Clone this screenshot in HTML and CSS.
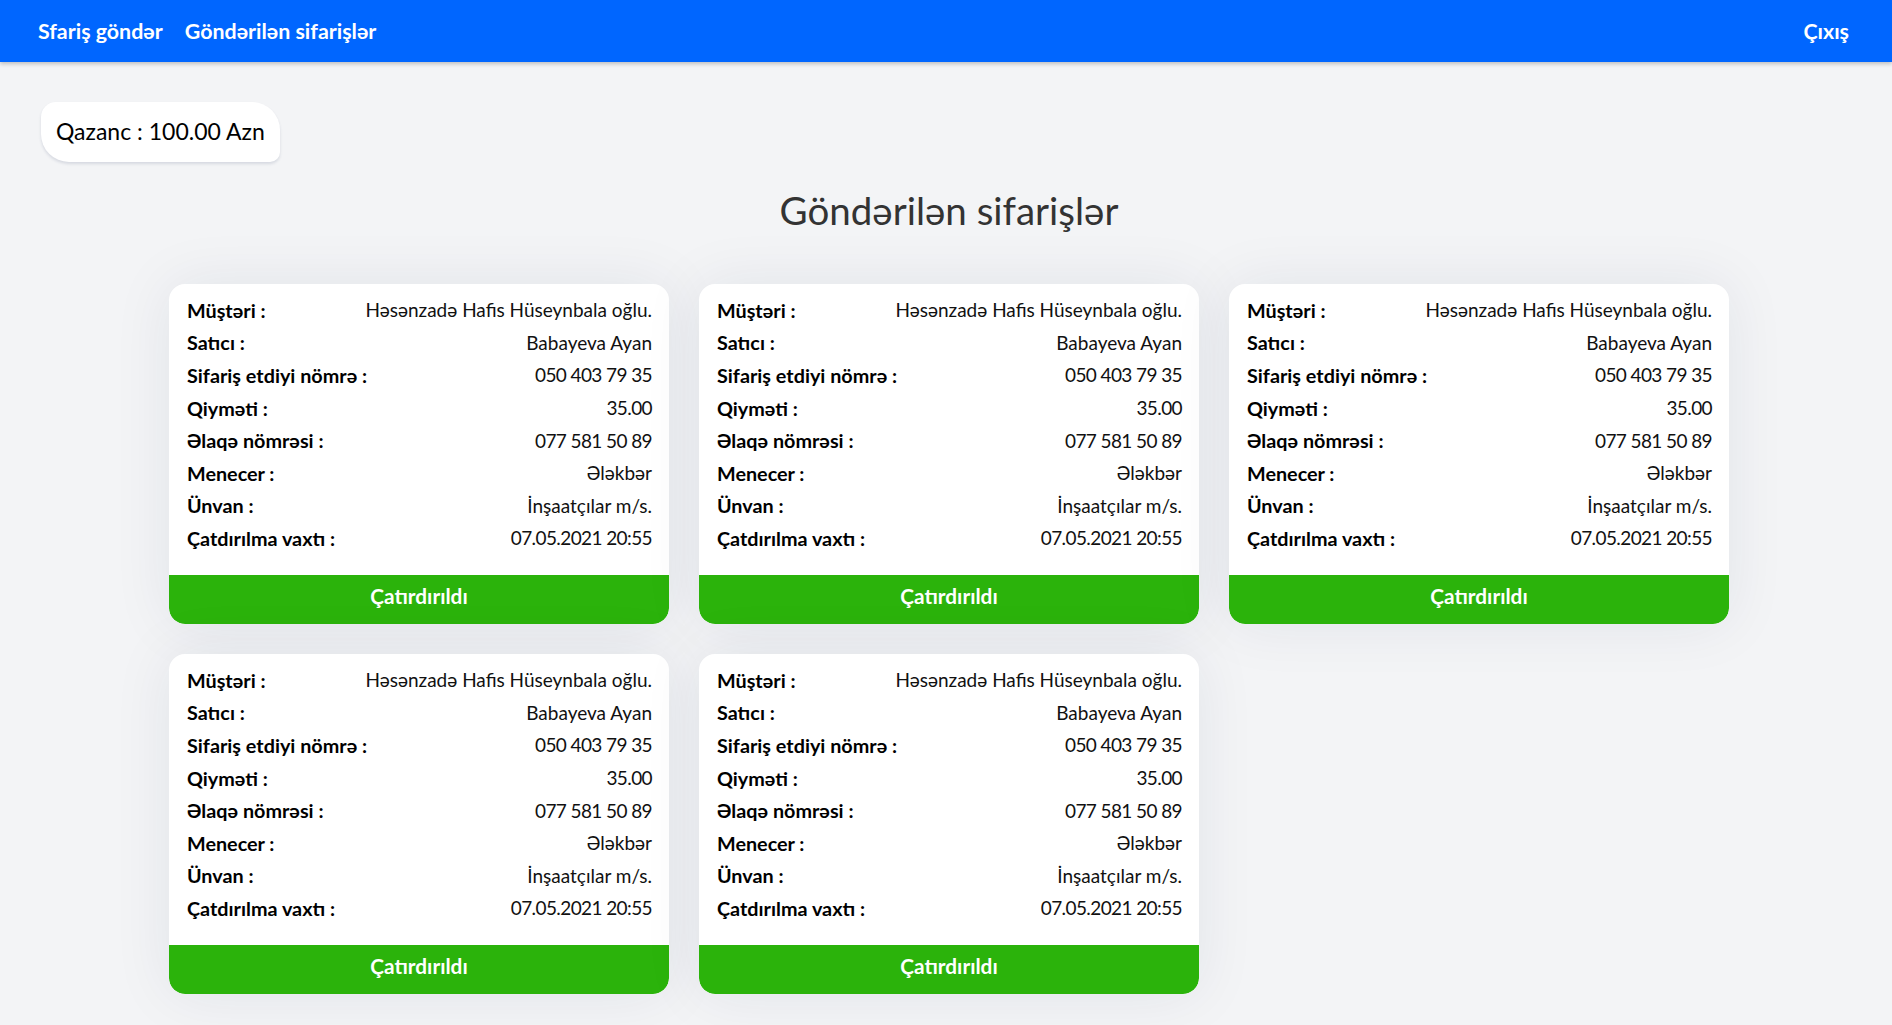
FILE: index.html
```html
<!DOCTYPE html>
<html lang="az">
<head>
<meta charset="utf-8">
<title>Göndərilən sifarişlər</title>
<link rel="stylesheet" href="styles.css">
</head>
<body>
<nav class="navbar">
  <div class="nav-links">
    <a class="nav-link" href="#">Sfariş göndər</a>
    <a class="nav-link" href="#">Göndərilən sifarişlər</a>
  </div>
  <a class="nav-link" href="#">Çıxış</a>
</nav>

<div class="earnings">Qazanc : 100.00 Azn</div>

<main class="orders">
  <h1 class="orders-title">Göndərilən sifarişlər</h1>
  <div class="order-grid">

    <div class="order-card">
      <div class="order-info">
        <div class="info-row"><span class="info-label">Müştəri :</span><span class="info-value">Həsənzadə Hafis Hüseynbala oğlu.</span></div>
        <div class="info-row"><span class="info-label">Satıcı :</span><span class="info-value">Babayeva Ayan</span></div>
        <div class="info-row"><span class="info-label">Sifariş etdiyi nömrə :</span><span class="info-value num">050 403 79 35</span></div>
        <div class="info-row"><span class="info-label">Qiyməti :</span><span class="info-value num">35.00</span></div>
        <div class="info-row"><span class="info-label">Əlaqə nömrəsi :</span><span class="info-value num">077 581 50 89</span></div>
        <div class="info-row"><span class="info-label">Menecer :</span><span class="info-value">Ələkbər</span></div>
        <div class="info-row"><span class="info-label">Ünvan :</span><span class="info-value">İnşaatçılar m/s.</span></div>
        <div class="info-row"><span class="info-label">Çatdırılma vaxtı :</span><span class="info-value num">07.05.2021 20:55</span></div>
      </div>
      <button class="deliver-btn">Çatırdırıldı</button>
    </div>

    <div class="order-card">
      <div class="order-info">
        <div class="info-row"><span class="info-label">Müştəri :</span><span class="info-value">Həsənzadə Hafis Hüseynbala oğlu.</span></div>
        <div class="info-row"><span class="info-label">Satıcı :</span><span class="info-value">Babayeva Ayan</span></div>
        <div class="info-row"><span class="info-label">Sifariş etdiyi nömrə :</span><span class="info-value num">050 403 79 35</span></div>
        <div class="info-row"><span class="info-label">Qiyməti :</span><span class="info-value num">35.00</span></div>
        <div class="info-row"><span class="info-label">Əlaqə nömrəsi :</span><span class="info-value num">077 581 50 89</span></div>
        <div class="info-row"><span class="info-label">Menecer :</span><span class="info-value">Ələkbər</span></div>
        <div class="info-row"><span class="info-label">Ünvan :</span><span class="info-value">İnşaatçılar m/s.</span></div>
        <div class="info-row"><span class="info-label">Çatdırılma vaxtı :</span><span class="info-value num">07.05.2021 20:55</span></div>
      </div>
      <button class="deliver-btn">Çatırdırıldı</button>
    </div>

    <div class="order-card">
      <div class="order-info">
        <div class="info-row"><span class="info-label">Müştəri :</span><span class="info-value">Həsənzadə Hafis Hüseynbala oğlu.</span></div>
        <div class="info-row"><span class="info-label">Satıcı :</span><span class="info-value">Babayeva Ayan</span></div>
        <div class="info-row"><span class="info-label">Sifariş etdiyi nömrə :</span><span class="info-value num">050 403 79 35</span></div>
        <div class="info-row"><span class="info-label">Qiyməti :</span><span class="info-value num">35.00</span></div>
        <div class="info-row"><span class="info-label">Əlaqə nömrəsi :</span><span class="info-value num">077 581 50 89</span></div>
        <div class="info-row"><span class="info-label">Menecer :</span><span class="info-value">Ələkbər</span></div>
        <div class="info-row"><span class="info-label">Ünvan :</span><span class="info-value">İnşaatçılar m/s.</span></div>
        <div class="info-row"><span class="info-label">Çatdırılma vaxtı :</span><span class="info-value num">07.05.2021 20:55</span></div>
      </div>
      <button class="deliver-btn">Çatırdırıldı</button>
    </div>

    <div class="order-card">
      <div class="order-info">
        <div class="info-row"><span class="info-label">Müştəri :</span><span class="info-value">Həsənzadə Hafis Hüseynbala oğlu.</span></div>
        <div class="info-row"><span class="info-label">Satıcı :</span><span class="info-value">Babayeva Ayan</span></div>
        <div class="info-row"><span class="info-label">Sifariş etdiyi nömrə :</span><span class="info-value num">050 403 79 35</span></div>
        <div class="info-row"><span class="info-label">Qiyməti :</span><span class="info-value num">35.00</span></div>
        <div class="info-row"><span class="info-label">Əlaqə nömrəsi :</span><span class="info-value num">077 581 50 89</span></div>
        <div class="info-row"><span class="info-label">Menecer :</span><span class="info-value">Ələkbər</span></div>
        <div class="info-row"><span class="info-label">Ünvan :</span><span class="info-value">İnşaatçılar m/s.</span></div>
        <div class="info-row"><span class="info-label">Çatdırılma vaxtı :</span><span class="info-value num">07.05.2021 20:55</span></div>
      </div>
      <button class="deliver-btn">Çatırdırıldı</button>
    </div>

    <div class="order-card">
      <div class="order-info">
        <div class="info-row"><span class="info-label">Müştəri :</span><span class="info-value">Həsənzadə Hafis Hüseynbala oğlu.</span></div>
        <div class="info-row"><span class="info-label">Satıcı :</span><span class="info-value">Babayeva Ayan</span></div>
        <div class="info-row"><span class="info-label">Sifariş etdiyi nömrə :</span><span class="info-value num">050 403 79 35</span></div>
        <div class="info-row"><span class="info-label">Qiyməti :</span><span class="info-value num">35.00</span></div>
        <div class="info-row"><span class="info-label">Əlaqə nömrəsi :</span><span class="info-value num">077 581 50 89</span></div>
        <div class="info-row"><span class="info-label">Menecer :</span><span class="info-value">Ələkbər</span></div>
        <div class="info-row"><span class="info-label">Ünvan :</span><span class="info-value">İnşaatçılar m/s.</span></div>
        <div class="info-row"><span class="info-label">Çatdırılma vaxtı :</span><span class="info-value num">07.05.2021 20:55</span></div>
      </div>
      <button class="deliver-btn">Çatırdırıldı</button>
    </div>

  </div>
</main>
</body>
</html>
```
FILE: styles.css
```css
* { box-sizing: border-box; }

html, body {
  margin: 0;
  padding: 0;
}

body {
  background: #f3f4f6;
  font-family: "Lato", "Open Sans", "Noto Sans", sans-serif;
  color: #000;
  padding-bottom: 40px;
}

.navbar {
  height: 62px;
  background: #0066ff;
  display: flex;
  align-items: center;
  justify-content: space-between;
  padding: 1px 43px 0 38px;
  box-shadow: 0 2px 4px rgba(0, 0, 0, 0.22);
}

.nav-links {
  display: flex;
  gap: 22px;
}

.nav-link {
  color: #fff;
  text-decoration: none;
  font-weight: 700;
  font-size: 21.4px;
  line-height: 1.2;
}

.earnings {
  display: block;
  width: fit-content;
  margin: 40px 0 0 41px;
  height: 60px;
  padding: 0 15px;
  background: #fff;
  border-radius: 15px 28px 10px 28px;
  box-shadow: 0 2px 3px rgba(40, 60, 100, 0.14);
  font-size: 23px;
  line-height: 58px;
  color: #000;
}

.orders {
  width: 1560px;
  margin: 0 0 0 169px;
}

.orders-title {
  margin: 25.5px 0 0;
  text-align: center;
  font-size: 38.5px;
  font-weight: 400;
  line-height: 44px;
  color: #333;
}

.order-grid {
  margin-top: 52.5px;
  display: grid;
  grid-template-columns: repeat(3, 500px);
  column-gap: 30px;
  row-gap: 30px;
}

.order-card {
  background: #fff;
  border-radius: 16px;
  box-shadow: 0 0 60px rgba(20, 40, 80, 0.08);
  display: flex;
  flex-direction: column;
  overflow: hidden;
}

.order-info {
  padding: 9.5px 17px 20.7px 18px;
}

.info-row {
  display: flex;
  justify-content: space-between;
  align-items: center;
  height: 32.6px;
}

.info-label {
  font-weight: 700;
  font-size: 19.8px;
  color: #000;
}

.info-value {
  font-weight: 400;
  font-size: 19px;
  color: #111;
}

.info-value.num {
  letter-spacing: -0.6px;
}

.deliver-btn {
  height: 49px;
  border: none;
  padding: 0 0 7px;
  background: #2bb30b;
  color: #fff;
  font-family: inherit;
  font-weight: 700;
  font-size: 20.8px;
  border-radius: 0 0 16px 16px;
  cursor: pointer;
}
```
